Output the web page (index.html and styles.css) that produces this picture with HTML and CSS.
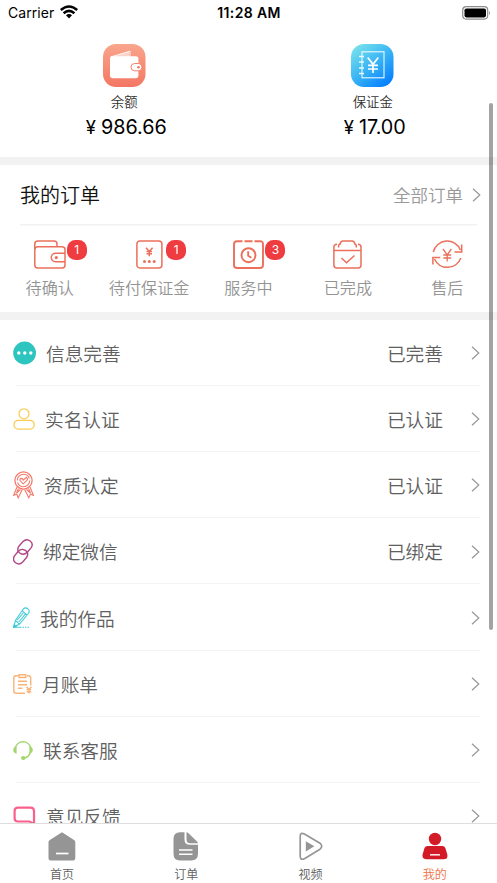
FILE: index.html
```html
<!DOCTYPE html>
<html lang="zh-CN">
<head>
<meta charset="utf-8">
<title>我的</title>
<link rel="stylesheet" href="styles.css">
</head>
<body>
<div class="app">
  <header class="status">
    <div class="carrier"><span>Carrier</span>
      <svg width="18" height="14" viewBox="0 0 18 14"><g fill="none" stroke="#000" stroke-width="2.5"><path d="M.8 5Q9-2 17.2 5"/><path d="M3.6 8.2Q9 3.6 14.4 8.2"/></g><path d="M6 10.3Q9 7.8 12 10.3L9 13.4Z"/></svg>
    </div>
    <div class="clock">11:28 AM</div>
    <div class="battery"><svg width="29" height="14" viewBox="0 0 29 14"><rect x=".7" y=".7" width="25" height="12.4" rx="3.5" fill="none" stroke="#8c8c8c" stroke-width="1.2"/><rect x="2.5" y="2.4" width="21.5" height="9" rx="1.8"/><path d="M27.2 5Q29 6.8 27.2 9Z" fill="#8c8c8c"/></svg></div>
  </header>
  <main class="content">
    <section class="wallets">
      <div class="wallet">
        <svg width="43" height="43" viewBox="0 0 43 43"><defs><linearGradient id="coral" x2="0" y2="1"><stop stop-color="#faa58d"/><stop offset="1" stop-color="#f37763"/></linearGradient></defs><rect width="42.5" height="43" rx="13" fill="url(#coral)"/><path d="M8 13L26 7.5V13Z" fill="#fcd3c9"/><path d="M8 12.8L27 7.2V13" fill="none" stroke="#fff" stroke-width=".9"/><path d="M7 14Q7 12.3 9 12.3H33Q35.4 12.3 35.4 15V31.5Q35.4 34.3 32.5 34.3H10Q7 34.3 7 31.5Z" fill="#fff"/><rect x="28" y="19.5" width="11" height="7.3" rx="3.6" fill="#fff" stroke="#f4806b"/><circle cx="35.5" cy="23.2" r="1.3" fill="#f37763"/></svg>
        <div class="wallet-label">余额</div><div class="amount"><span class="yen">¥</span>986.66</div>
      </div>
      <div class="wallet">
        <svg width="43" height="43" viewBox="0 0 43 43"><defs><linearGradient id="sky" x1=".1" y1="0" x2=".9" y2="1"><stop stop-color="#7be5eb"/><stop offset=".5" stop-color="#38b3f5"/><stop offset="1" stop-color="#0079ff"/></linearGradient></defs><rect width="42.5" height="43" rx="13" fill="url(#sky)"/><g fill="none" stroke="#e9faff"><rect x="11" y="7.8" width="22" height="26" stroke-width="1.1"/><path d="M8 12.5H13M8 18H13M8 24H13M8 29.5H13" stroke-width="1.5"/><path d="M16.7 13.5L22 20.3L27.3 13.5M22 20V29M17 21.3H27M17 25H27" stroke="#fff" stroke-width="1.7"/></g></svg>
        <div class="wallet-label">保证金</div><div class="amount"><span class="yen">¥</span>17.00</div>
      </div>
    </section>
    <section class="orders">
      <div class="orders-head"><h2>我的订单</h2><div class="all"><span>全部订单</span><svg class="chev" viewBox="0 0 9 14"><path d="M1 .8L7.8 7L1 13.2"/></svg></div></div>
      <div class="order-types">
        <div class="type"><div class="type-icon"><svg width="32" height="29" viewBox="0 0 32 29"><rect x=".8" y="6.7" width="30.2" height="21.3" rx="3"/><path d="M.8 9V4Q.8 1 4 1H20Q23 1 23 4V6.5M31 13.3H21.5A4.2 4.2 0 0 0 21.5 21.7H31"/><circle cx="22.3" cy="17.6" r="1.6" fill="#ea705b" stroke="none"/></svg><b class="badge">1</b></div><span>待确认</span></div>
        <div class="type"><div class="type-icon"><svg width="27" height="29" viewBox="0 0 27 29"><rect x=".9" y=".9" width="25" height="27" rx="3"/><path d="M10 7.7L13.3 11.4L16.6 7.7M13.3 11V16.2M10.5 11.5H16M10.5 13.8H16"/><g fill="#ea705b" stroke="none"><circle cx="8.5" cy="21.6" r="1.5"/><circle cx="13.3" cy="21.6" r="1.5"/><circle cx="18.2" cy="21.6" r="1.5"/></g></svg><b class="badge">1</b></div><span>待付保证金</span></div>
        <div class="type"><div class="type-icon"><svg class="bold" width="31" height="29" viewBox="0 0 31 29"><path d="M9.5 1.2H4Q1 1.2 1 4.2V25Q1 28 4 28H27Q30 28 30 25V4.2Q30 1.2 27 1.2H21.5M11.5 1.2H19.5"/><circle cx="15.5" cy="15.2" r="7"/><path d="M15.2 11.2V15.8L18.4 17.8"/></svg><b class="badge">3</b></div><span>服务中</span></div>
        <div class="type"><div class="type-icon"><svg width="29" height="29" viewBox="0 0 29 29"><path d="M4 4.2Q.9 4.2 .9 7V25Q.9 28 4 28H25Q28 28 28 25V7Q28 4.2 25 4.2M5.6 7.5V5.5Q5.6 4.2 7 4.2Q7.5 1 10 1H19Q21.5 1 22 4.2Q23.3 4.2 23.3 5.5V7.5M1 10.5H28M8.5 18L13.5 22.8L21.5 15.5"/></svg></div><span>已完成</span></div>
        <div class="type"><div class="type-icon"><svg width="31" height="29" viewBox="0 0 31 29"><path d="M1.3 12A14.2 14.2 0 0 1 28.3 10M29.7 4.6V12H22.5M28.8 18A14.2 14.2 0 0 1 2.5 19M.9 24.5V17.5H8.3"/><path d="M11 9L15.2 14.8L19.4 9M15.2 14.5V21.5M11.3 15H19.2M11.3 18H19.2" stroke-width="1.3"/></svg></div><span>售后</span></div>
      </div>
    </section>
    <section class="menu">
      <div class="row"><svg width="23" height="24" viewBox="0 0 23 24"><circle cx="11.6" cy="12" r="11.4" fill="#2ec4bf"/><g fill="#fff"><circle cx="5.8" cy="12" r="1.7"/><circle cx="11.8" cy="12" r="1.7"/><circle cx="17.8" cy="12" r="1.7"/></g></svg><span class="name">信息完善</span><span class="state">已完善</span><svg class="chev" viewBox="0 0 9 14"><path d="M1 .8L7.8 7L1 13.2"/></svg></div>
      <div class="row"><svg width="22" height="22" viewBox="0 0 22 22" fill="none" stroke="#f7cd58" stroke-width="1.3"><circle cx="11" cy="5.8" r="5"/><rect x="1" y="12.3" width="20.2" height="8.8" rx="4.3"/></svg><span class="name">实名认证</span><span class="state">已认证</span><svg class="chev" viewBox="0 0 9 14"><path d="M1 .8L7.8 7L1 13.2"/></svg></div>
      <div class="row"><svg width="21" height="28" viewBox="0 0 21 28" fill="none" stroke="#f5796b" stroke-width="1.1"><circle cx="10.5" cy="9.5" r="8.6" stroke-width="1.3"/><circle cx="10.5" cy="9.5" r="6.2" stroke-dasharray="17 2"/><path d="M10.3 12.8L7.2 9.8Q6.5 7.5 8.4 7.4Q9.7 7.4 10.3 9L13.5 6.3Q15.3 8 13.8 9.4ZM4 16L.7 24.3L3.7 23L5.2 26.9L9.3 18.6M17 16L20.4 24.3L17.4 23L15.8 26.9L11.7 18.6M5.5 17.5L3.5 22M15.5 17.5L17.5 22M3.5 22L7.5 18.5M17.5 22L13.5 18.5"/></svg><span class="name">资质认定</span><span class="state">已认证</span><svg class="chev" viewBox="0 0 9 14"><path d="M1 .8L7.8 7L1 13.2"/></svg></div>
      <div class="row"><svg width="20" height="26" viewBox="0 0 20 26" fill="none" stroke="#b04686" stroke-width="1.4"><path d="M9.5 15.2C4.3 14 3.7 9.6 6.3 6.7L10 2.6C14.8-2 21.5 3.5 18.2 8.7L14.3 13.2Q12.3 15.3 9.5 15.2"/><path d="M9.5 10.4C15 11.2 15.8 15.7 13.3 18.8L9.7 22.9C5 27.7-1.8 22.2 1.5 16.9L5.3 12.3Q7 10.3 9.5 10.4"/></svg><span class="name">绑定微信</span><span class="state">已绑定</span><svg class="chev" viewBox="0 0 9 14"><path d="M1 .8L7.8 7L1 13.2"/></svg></div>
      <div class="row"><svg width="17" height="22" viewBox="0 0 17 22" fill="none" stroke="#42cbd6" stroke-width="1.1"><path d="M.8 19.8L2.4 13.5L10.3 2Q13-.5 15.5 2.5Q17 4.5 15.3 6.5L6.4 17.3ZM2.5 13.5L6.4 17.2M9.3 3.8L14 8M4.3 13L11 5M5.8 15L12.8 6.7M.5 20.3H7"/><path d="M7 20.3H17" stroke-dasharray="1.5 1"/><path d="M.6 20.4L1.2 17.8L3.2 19.5Z" fill="#10bdc8"/></svg><span class="name">我的作品</span><svg class="chev" viewBox="0 0 9 14"><path d="M1 .8L7.8 7L1 13.2"/></svg></div>
      <div class="row"><svg width="19" height="20" viewBox="0 0 19 20" fill="none" stroke="#f8b478" stroke-width="1.4"><path d="M5 1.8H3Q.8 1.8 .8 4V17Q.8 19.2 3 19.2H12M14 1.8H15.5Q17.7 1.8 17.7 4V11.5M6 .8H12.8V3.5H6ZM5 7.3H14M5 10.7H14M5 14.2H9.5M13.6 12.8L16 15.6L18.4 12.8M16 15.5V19.5M13.7 15.6H18.3M13.7 17.7H18.3"/></svg><span class="name">月账单</span><svg class="chev" viewBox="0 0 9 14"><path d="M1 .8L7.8 7L1 13.2"/></svg></div>
      <div class="row"><svg width="20" height="20" viewBox="0 0 20 20" fill="none" stroke="#a3d66c" stroke-width="1.4"><path d="M2.2 8A8 8 0 0 1 17.8 8M17.3 12Q16 17.8 10.5 18"/><path d="M3.6 6.3V13.7Q.2 12.8 .2 10Q.2 7.2 3.6 6.3ZM16.4 6.3V13.7Q19.8 12.8 19.8 10Q19.8 7.2 16.4 6.3Z" fill="#a3d66c" stroke="none"/><ellipse cx="10.3" cy="17.9" rx="2.3" ry="2" fill="#a3d66c" stroke="none"/></svg><span class="name">联系客服</span><svg class="chev" viewBox="0 0 9 14"><path d="M1 .8L7.8 7L1 13.2"/></svg></div>
      <div class="row"><svg width="23" height="20" viewBox="0 0 23 20" fill="none" stroke="#f9608b" stroke-width="2.2"><path d="M5 1.6H17.5Q21 1.6 21 5V18L16.5 15.5H5Q1.6 15.5 1.6 12.2V5Q1.6 1.6 5 1.6Z"/></svg><span class="name">意见反馈</span><svg class="chev" viewBox="0 0 9 14"><path d="M1 .8L7.8 7L1 13.2"/></svg></div>
    </section>
  </main>
  <nav class="tabs">
    <div class="tab"><svg width="28" height="29" viewBox="0 0 28 29"><path d="M14 .3L26 8Q27.3 8.8 27.3 10V26Q27.3 28.5 25 28.5H3Q.5 28.5 .5 26V10Q.5 8.8 1.8 8Z" fill="#959595"/><path d="M8 21.5H20.5" stroke="#fff" stroke-width="1.7"/></svg><span>首页</span></div>
    <div class="tab"><svg width="26" height="29" viewBox="0 0 26 29"><path d="M7 .3H11.5V7.5Q11.5 12.8 17 12.8H25V21.5Q25 28.5 18 28.5H7Q.5 28.5 .5 21.5V7Q.5 .3 7 .3ZM13.5 .3Q14.5 .3 15.5 1.2L24 9.5Q25 10.7 25 11.2H17Q13.5 11 13.5 7.5Z" fill="#959595"/><path d="M6 18H19.5M6 22.3H19.5" stroke="#fff" stroke-width="1.6"/></svg><span>订单</span></div>
    <div class="tab"><svg width="24" height="29" viewBox="0 0 24 29"><path d="M1.2 4.4Q1.2-.2 5.4 2L21 11.2Q24.5 14.5 21 17.2L5.8 26.5Q1.5 28.7 1.2 24.5Z" fill="none" stroke="#969696" stroke-width="1.7"/><path d="M6.8 9.3L15.3 14.3L6.8 19.4Z" fill="#959595"/></svg><span>视频</span></div>
    <div class="tab active"><svg width="26" height="29" viewBox="0 0 26 29"><g fill="#d31b28"><circle cx="13" cy="7" r="6.2"/><path d="M5.5 14H20.5Q22.3 14 23.3 16L25.2 22Q26.5 27.2 21.5 27.2H4.5Q-.5 27.2 .7 22L2.5 16Q3.5 14 5.5 14Z"/></g><path d="M8 22.8H18" stroke="#ffe5e5" stroke-width="1.6"/></svg><span>我的</span></div>
  </nav>
  <div class="scrollbar"></div>
</div>
</body>
</html>
```
FILE: styles.css
```css
* { box-sizing: border-box; }
body { margin: 0; background: #fff; font-family: Inter, "Noto Sans CJK SC", sans-serif; font-weight: 350; color: #000; }
svg { display: block; flex: none; }
.app { position: relative; height: 883px; overflow: hidden; display: flex; flex-direction: column; }
.status { flex: none; height: 26px; display: grid; grid-template-columns: 1fr auto 1fr; align-items: center; padding: 0 6px 0 8px; font-size: 14px; line-height: 26px; font-weight: 400; }
.carrier { display: flex; align-items: center; gap: 6px; letter-spacing: .05px; }
.carrier svg { margin-top: -2px; }
.clock { font-weight: 600; font-size: 14px; letter-spacing: .35px; margin-left: -1px; }
.battery { justify-self: end; margin-top: -1px; }
.content { flex: 1; min-height: 0; overflow: hidden; }
.wallets { display: grid; grid-template-columns: 1fr 1fr; height: 130.5px; padding-top: 18px; }
.wallet { display: flex; flex-direction: column; align-items: center; }
.wallet-label { margin-top: 5px; font-size: 13.4px; line-height: 20px; color: #333; }
.amount { margin-top: 3px; font-size: 19.8px; line-height: 24px; margin-left: 4px; font-weight: 400; }
.yen { font-size: 18.5px; margin-right: 5px; }
.orders { border-top: 8px solid #f2f2f2; border-bottom: 8px solid #f2f2f2; height: 163.5px; }
.orders-head { display: flex; align-items: center; justify-content: space-between; height: 61px; margin: 0 16px 0 20px; padding-bottom: 1px; background: linear-gradient(#f1f1f1, #f1f1f1) 0 100% / 457px 1.5px no-repeat; }
.orders-head h2 { margin: 0; padding-top: 2px; font-weight: inherit; font-size: 20px; line-height: 28px; color: #111; }
.all { display: flex; align-items: center; gap: 9px; font-size: 17.5px; color: #999; }
.chev { width: 9px; height: 14px; fill: none; stroke: #979797; stroke-width: 1.2; }
.order-types { display: grid; grid-template-columns: repeat(5, 1fr); padding-top: 14px; }
.type { display: flex; flex-direction: column; align-items: center; gap: 7px; font-size: 16.1px; line-height: 24px; color: #949494; white-space: nowrap; }
.type-icon { position: relative; width: 32px; display: flex; justify-content: center; }
.type-icon svg { fill: none; stroke: #ea705b; stroke-width: 1.5; }
.type-icon .bold { stroke-width: 1.9; }
.badge { position: absolute; left: 33px; top: 0; width: 20px; height: 20px; border-radius: 8.5px; background: #ef3c40; color: #fff; font-size: 12px; line-height: 20px; font-weight: 400; text-align: center; }
.row { height: 66.2px; display: flex; align-items: center; margin-left: 13px; padding-right: 17px; background: linear-gradient(#f3f3f3, #f3f3f3) 3px 100% / 464px 1.3px no-repeat; font-size: 18.7px; line-height: 28px; color: #606060; }
.name { margin-left: 10px; padding-top: 3.4px; }
.row .chev { margin-left: auto; }
.state { margin-left: auto; margin-right: 28px; padding-top: 3.4px; }
.state + .chev { margin-left: 0; }
.tabs { flex: none; height: 60px; border-top: 1.5px solid #dedede; background: #fff; display: grid; grid-template-columns: repeat(4, 1fr); padding-top: 8px; }
.tab { display: flex; flex-direction: column; align-items: center; gap: 4.5px; font-size: 12px; line-height: 18px; color: #606060; }
.tab.active { color: #ee7044; }
.scrollbar { position: absolute; left: 489px; top: 103px; width: 4px; height: 527px; border-radius: 2px; background: rgba(0,0,0,.36); }
```
